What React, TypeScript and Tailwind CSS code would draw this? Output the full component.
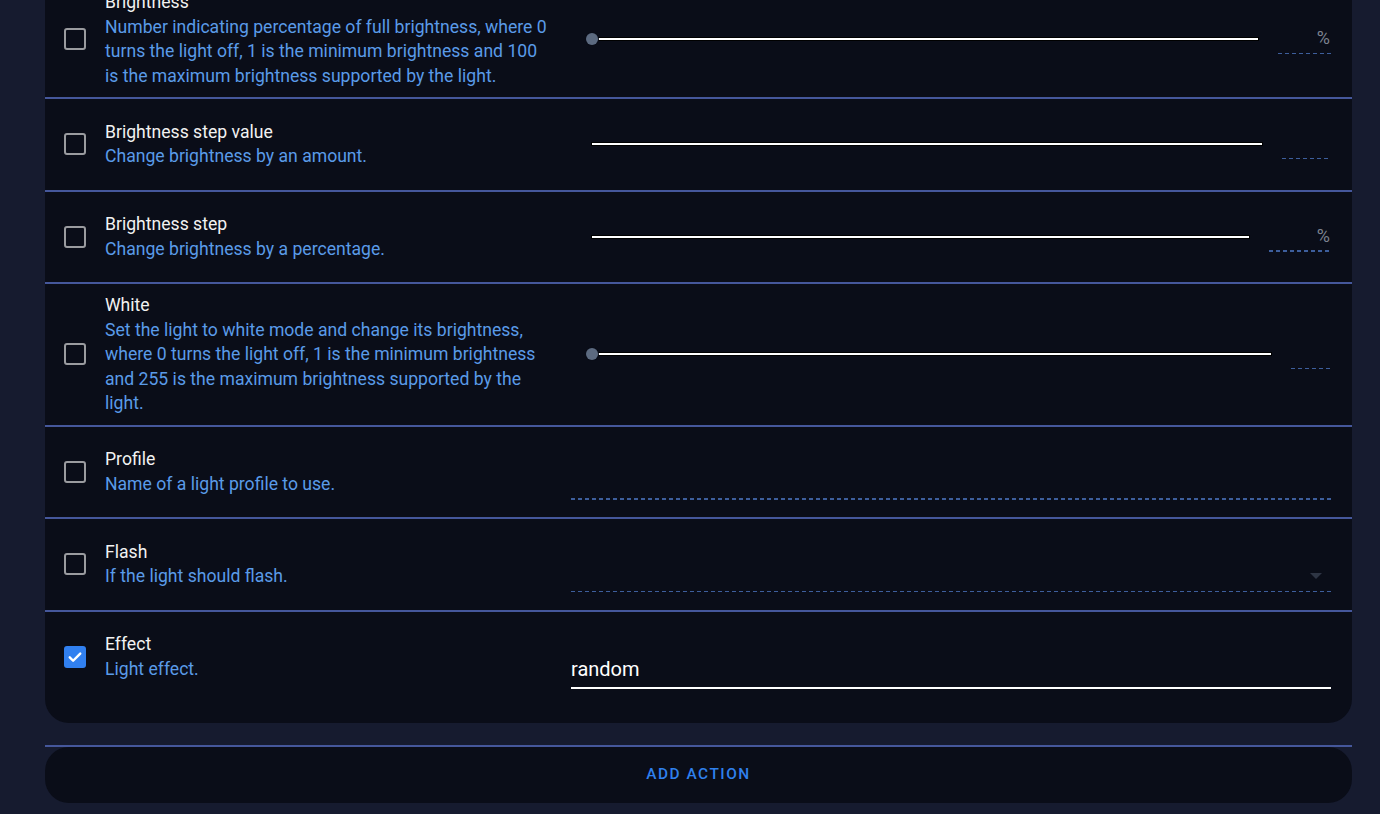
import React from 'react';

type Row = {
    title: string;
    desc: string;
    checked?: boolean;
    control: React.ReactNode;
};

function Checkbox({ checked }: { checked?: boolean }) {
    if (checked) {
        return (
            <div className="flex h-[22px] w-[22px] shrink-0 items-center justify-center rounded-[3px] bg-[#3180f0]">
                <svg viewBox="0 0 24 24" className="h-[18px] w-[18px]" fill="none" stroke="white" strokeWidth="3.2" strokeLinecap="round" strokeLinejoin="round">
                    <path d="M5 12.5l4.5 4.5L19 7.5" />
                </svg>
            </div>
        );
    }
    return <div className="h-[22px] w-[22px] shrink-0 rounded-[3px] border-2 border-[#9a9b9f]" />;
}

function Dashed({ className = '' }: { className?: string }) {
    return (
        <div
            className={`h-[1.5px] bg-[repeating-linear-gradient(90deg,#3d5e9c_0px,#3d5e9c_4px,transparent_4px,transparent_7px)] ${className}`}
        />
    );
}

function Slider({ knob, fieldW, unit }: { knob?: boolean; fieldW: string; unit?: boolean }) {
    return (
        <div className="flex w-full items-center">
            <div className="relative ml-[21px] flex h-[12px] flex-1 items-center">
                <div className="h-[2px] w-full bg-white shadow-[0_0_0_1px_#000]" />
                {knob && (
                    <div className="absolute left-[-6px] top-[0px] h-[12px] w-[12px] rounded-full bg-[#5c6a80] ring-1 ring-[#0a0d18]" />
                )}
            </div>
            <div className={`ml-[20px] flex h-[32px] flex-col justify-end ${fieldW}`}>
                <div className="flex flex-1 items-center justify-end pr-[1px] text-[18px] text-[#7d8390]">
                    {unit ? '%' : ''}
                </div>
                <Dashed className="mb-[1px]" />
            </div>
        </div>
    );
}

function TextField({ dropdown }: { dropdown?: boolean }) {
    return (
        <div className="flex h-[56px] w-full flex-col justify-end">
            <div className="flex flex-1 items-end justify-end pb-[12px] pr-[9px]">
                {dropdown && (
                    <div className="h-0 w-0 border-x-[6px] border-t-[6px] border-x-transparent border-t-[#2e3544]" />
                )}
            </div>
            <Dashed />
        </div>
    );
}

const rows: Row[] = [
    {
        title: 'Brightness',
        desc: 'Number indicating percentage of full brightness, where 0 turns the light off, 1 is the minimum brightness and 100 is the maximum brightness supported by the light.',
        control: <Slider knob unit fieldW="w-[53px]" />,
    },
    {
        title: 'Brightness step value',
        desc: 'Change brightness by an amount.',
        control: <Slider fieldW="w-[49px]" />,
    },
    {
        title: 'Brightness step',
        desc: 'Change brightness by a percentage.',
        control: <Slider unit fieldW="w-[62px]" />,
    },
    {
        title: 'White',
        desc: 'Set the light to white mode and change its brightness, where 0 turns the light off, 1 is the minimum brightness and 255 is the maximum brightness supported by the light.',
        control: <Slider knob fieldW="w-[40px]" />,
    },
    {
        title: 'Profile',
        desc: 'Name of a light profile to use.',
        control: <TextField />,
    },
    {
        title: 'Flash',
        desc: 'If the light should flash.',
        control: <TextField dropdown />,
    },
    {
        title: 'Effect',
        desc: 'Light effect.',
        checked: true,
        control: (
            <div className="flex h-[64px] w-full flex-col justify-end">
                <div className="text-[20px] leading-[24px] text-white">random</div>
                <div className="mt-[6px] h-[2px] w-full bg-white" />
            </div>
        ),
    },
];

export default function App() {
    return (
        <div className="h-[814px] w-full overflow-hidden bg-[#161b2f] font-['Roboto',sans-serif]">
            <div className="ml-[45px] mt-[-19px] w-[1307px]">
                {/* Service data card */}
                <div className="rounded-b-[24px] bg-[#0a0d18] pb-[21px]">
                    {rows.map((row, i) => (
                        <div
                            key={row.title}
                            className={`flex items-center py-[9px] pl-[19px] pr-[21px] ${
                                i < rows.length - 1 ? 'min-h-[92.5px] border-b-2 border-[#45579b]' : 'min-h-[90px]'
                            }`}
                        >
                            <Checkbox checked={row.checked} />
                            <div className="ml-[19px] w-[445px] shrink-0 text-[17.6px] leading-[24.5px]">
                                <div className="text-[#f2f2f2]">{row.title}</div>
                                <div className="text-[#5a9be8]">{row.desc}</div>
                            </div>
                            <div className="ml-[21px] flex w-[760px] shrink-0 items-center">{row.control}</div>
                        </div>
                    ))}
                </div>

                {/* Add action */}
                <div className="mt-[22px] border-t-2 border-[#45579b]">
                    <div className="flex h-[56px] items-center justify-center rounded-[24px] bg-[#0a0d18] text-[15.4px] font-medium tracking-[1.5px] text-[#2f80ed]">
                        ADD ACTION
                    </div>
                </div>
            </div>
        </div>
    );
}
